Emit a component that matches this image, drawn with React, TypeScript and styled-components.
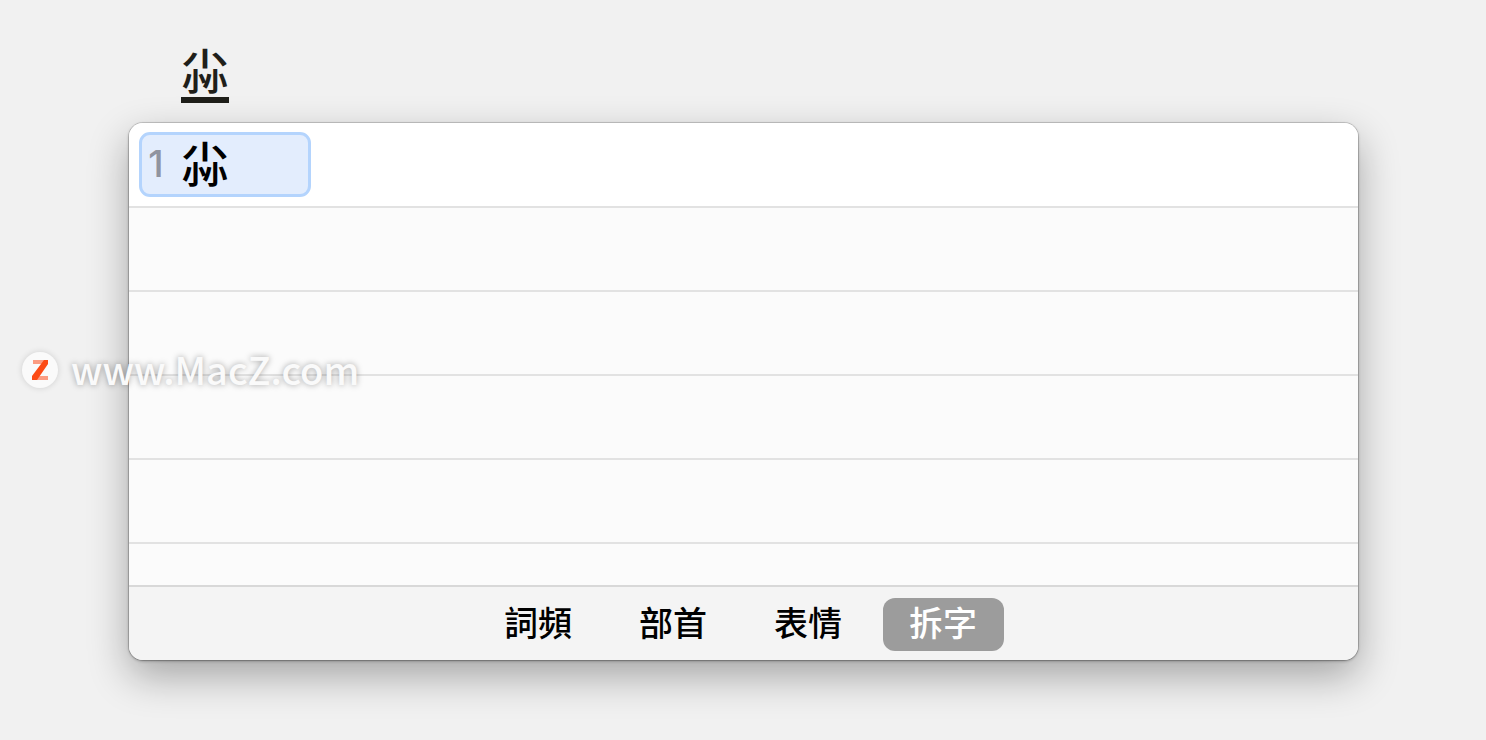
import React, { useState } from "react";
import styled, { createGlobalStyle } from "styled-components";

const GlobalStyle = createGlobalStyle`
  *, *::before, *::after { box-sizing: border-box; }
  body {
    margin: 0;
    background: #f1f1f1;
    color: #000;
    font-family: "Noto Sans CJK TC", "Noto Sans", sans-serif;
  }
  button { font-family: inherit; }
`;

const Page = styled.main`
  position: relative;
  display: flex;
  flex-direction: column;
  min-height: 100vh;
  padding: 44px 128px 80px 129px;
`;

const Glyph = styled.span`
  font-family: "Noto Sans CJK TC", sans-serif;
  font-size: 48px;
  font-weight: 500;
  line-height: 48px;
`;

const Composition = styled.p`
  display: flex;
  align-self: flex-start;
  margin: 0 0 20px 52px;
  padding-bottom: 5px;
  border-bottom: 6px solid #1f1f1a;
  color: #1f1f1a;
`;

const Panel = styled.section`
  overflow: hidden;
  border-radius: 14px;
  background: #fbfbfb;
  box-shadow:
    0 0 0 1px rgba(0, 0, 0, 0.14),
    0 1px 3px rgba(0, 0, 0, 0.35),
    0 16px 40px rgba(0, 0, 0, 0.32);
`;

const Rows = styled.ol`
  margin: 0;
  padding: 0;
  list-style: none;
`;

const rowHeights = { current: 85, empty: 84, partial: 41 };

const Row = styled.li<{ $kind: keyof typeof rowHeights }>`
  display: flex;
  align-items: center;
  height: ${({ $kind }) => rowHeights[$kind]}px;
  padding: 0 10px;
  border-bottom: ${({ $kind }) => ($kind === "partial" ? "0" : "2px solid #e2e2e2")};
  background: ${({ $kind }) => ($kind === "current" ? "#fff" : "#fbfbfb")};
`;

const Candidate = styled.button`
  display: flex;
  align-items: center;
  gap: 17px;
  width: 172px;
  height: 65px;
  padding: 0 6px 8px;
  border: 3px solid #b4d4fd;
  border-radius: 11px;
  background: #e3edfd;
  color: #000;
`;

const Index = styled.span`
  width: 16px;
  padding-top: 6px;
  color: #9094a0;
  font-family: Inter, sans-serif;
  font-size: 37px;
  font-weight: 500;
  line-height: 48px;
`;

const Tabs = styled.nav`
  display: flex;
  justify-content: center;
  gap: 14px;
  padding: 11px 5px 9px 0;
  border-top: 2px solid #d8d8d8;
  background: #f4f4f4;
`;

const Tab = styled.button<{ $active: boolean }>`
  width: 121px;
  height: 53px;
  padding: 0 1px 5px 0;
  border: 0;
  border-radius: 12px;
  background: ${({ $active }) => ($active ? "#9c9c9c" : "transparent")};
  color: ${({ $active }) => ($active ? "#fff" : "#000")};
  font-size: 34px;
  font-weight: 500;
  line-height: 48px;
`;

const Watermark = styled.div`
  position: absolute;
  top: 340px;
  left: 22px;
  display: flex;
  align-items: center;
  gap: 13px;
  color: #fafafa;
  font-size: 38px;
  font-weight: 500;
  line-height: 60px;
  text-shadow: 0 0 6px rgba(0, 0, 0, 0.36);
  pointer-events: none;
`;

const SiteName = styled.span`
  height: 60px;
  line-height: 58px;
`;

const Badge = styled.svg`
  width: 36px;
  height: 36px;
  border-radius: 50%;
  background: #fafafa;
  box-shadow: 0 0 6px rgba(0, 0, 0, 0.14);
`;

const tabs = ["詞頻", "部首", "表情", "拆字"];

export default function App() {
  const [active, setActive] = useState("拆字");
  return (
    <>
      <GlobalStyle />
      <Page>
        <Composition>
          <Glyph>尛</Glyph>
        </Composition>
        <Panel>
          <Rows>
            <Row $kind="current">
              <Candidate type="button">
                <Index>1</Index>
                <Glyph>尛</Glyph>
              </Candidate>
            </Row>
            <Row $kind="empty" />
            <Row $kind="empty" />
            <Row $kind="empty" />
            <Row $kind="empty" />
            <Row $kind="partial" />
          </Rows>
          <Tabs>
            {tabs.map((name) => (
              <Tab
                key={name}
                type="button"
                $active={name === active}
                aria-pressed={name === active}
                onClick={() => setActive(name)}
              >
                {name}
              </Tab>
            ))}
          </Tabs>
        </Panel>
        <Watermark>
          <Badge viewBox="0 0 36 36" aria-hidden="true">
            <path d="M11 8h15v4H11zM11 24h15v4H11z" fill="#fb9c82" />
            <path d="M22 8h4v4L15 28h-5v-4z" fill="#fc4a14" />
          </Badge>
          <SiteName>www.MacZ.com</SiteName>
        </Watermark>
      </Page>
    </>
  );
}
